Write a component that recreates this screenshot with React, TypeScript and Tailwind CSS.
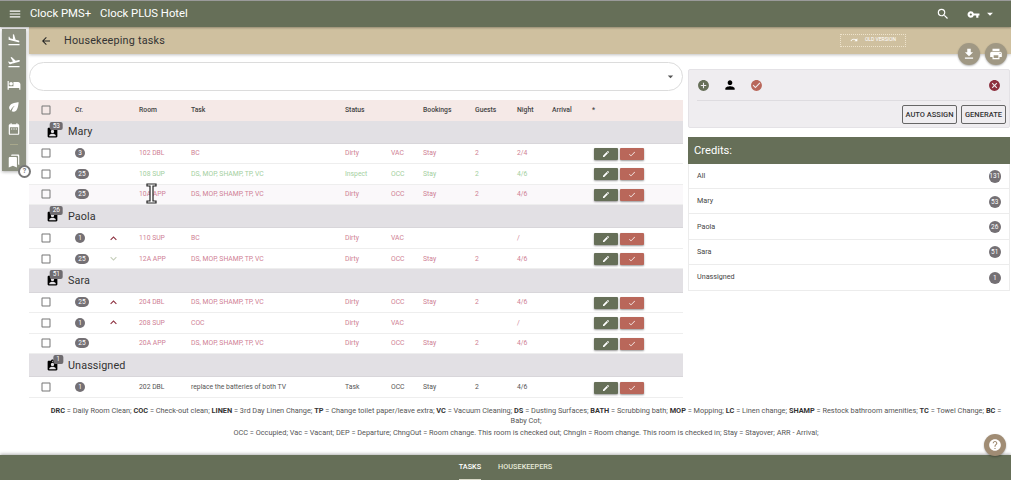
import {
    MdAddCircle,
    MdArrowBack,
    MdArrowDropDown,
    MdAssignmentInd,
    MdBookmarks,
    MdCancel,
    MdCheck,
    MdCheckCircle,
    MdCheckBoxOutlineBlank,
    MdDateRange,
    MdEco,
    MdEdit,
    MdFileDownload,
    MdFlightLand,
    MdFlightTakeoff,
    MdHelp,
    MdHotel,
    MdKeyboardArrowDown,
    MdKeyboardArrowUp,
    MdMenu,
    MdPerson,
    MdPrint,
    MdRedo,
    MdSearch,
    MdVpnKey
} from 'react-icons/md';

type Tone = 'red' | 'green' | 'dark';

type Row = {
    cr: string;
    chevron?: 'up' | 'down';
    room: string;
    task: string;
    status: string;
    occ: string;
    guests?: string;
    night: string;
    booking?: string;
    tone: Tone;
    tint?: boolean;
};

type Group = { name: string; count: string; rows: Row[] };

const ds = 'DS, MOP, SHAMP, TP, VC';

const groups: Group[] = [
    {
        name: 'Mary',
        count: '53',
        rows: [
            { cr: '3', room: '102 DBL', task: 'BC', status: 'Dirty', occ: 'VAC', booking: 'Stay', guests: '2', night: '2/4', tone: 'red' },
            { cr: '25', room: '108 SUP', task: ds, status: 'Inspect', occ: 'OCC', booking: 'Stay', guests: '2', night: '4/6', tone: 'green' },
            { cr: '25', room: '10A APP', task: ds, status: 'Dirty', occ: 'OCC', booking: 'Stay', guests: '2', night: '4/6', tone: 'red', tint: true }
        ]
    },
    {
        name: 'Paola',
        count: '26',
        rows: [
            { cr: '1', chevron: 'up', room: '110 SUP', task: 'BC', status: 'Dirty', occ: 'VAC', night: '/', tone: 'red' },
            { cr: '25', chevron: 'down', room: '12A APP', task: ds, status: 'Dirty', occ: 'OCC', booking: 'Stay', guests: '2', night: '4/6', tone: 'red' }
        ]
    },
    {
        name: 'Sara',
        count: '51',
        rows: [
            { cr: '25', chevron: 'up', room: '204 DBL', task: ds, status: 'Dirty', occ: 'OCC', booking: 'Stay', guests: '2', night: '4/6', tone: 'red' },
            { cr: '1', chevron: 'up', room: '208 SUP', task: 'COC', status: 'Dirty', occ: 'VAC', night: '/', tone: 'red' },
            { cr: '25', room: '20A APP', task: ds, status: 'Dirty', occ: 'OCC', booking: 'Stay', guests: '2', night: '4/6', tone: 'red' }
        ]
    },
    {
        name: 'Unassigned',
        count: '1',
        rows: [
            { cr: '1', room: '202 DBL', task: 'replace the batteries of both TV', status: 'Task', occ: 'OCC', booking: 'Stay', guests: '2', night: '4/6', tone: 'dark' }
        ]
    }
];

const credits = [
    { name: 'All', value: '131' },
    { name: 'Mary', value: '53' },
    { name: 'Paola', value: '26' },
    { name: 'Sara', value: '51' },
    { name: 'Unassigned', value: '1' }
];

const columns = 'grid grid-cols-[46px_33px_31px_52px_154px_46px_32px_52px_42px_35px_40px_1fr] items-center';

const toneClass: Record<Tone, string> = {
    red: 'text-[#cf7f95]',
    green: 'text-[#a3cfa0]',
    dark: 'text-[#555]'
};

function Checkbox() {
    return <MdCheckBoxOutlineBlank size={12} className="ml-[11px] text-[#777]" />;
}

function TaskRow({ row }: { row: Row }) {
    const bg = row.tint ? 'bg-[#faf8fa]' : 'bg-white';
    return (
        <div className={`${columns} h-[20.5px] ${bg} ${toneClass[row.tone]} border-b border-[#eeeeee] text-[6.8px]`}>
            <Checkbox />
            <span className={`${row.cr.length > 1 ? 'w-[14px]' : 'w-[10px]'} h-[10px] rounded-full bg-[#747074] text-white text-[6.5px] leading-[10px] text-center`}>
                {row.cr}
            </span>
            <span className="-ml-[1px]">
                {row.chevron === 'up' && <MdKeyboardArrowUp size={13} className="text-[#8c2f3e]" />}
                {row.chevron === 'down' && <MdKeyboardArrowDown size={13} className="text-[#c4cdb9]" />}
            </span>
            <span>{row.room}</span>
            <span>{row.task}</span>
            <span>{row.status}</span>
            <span>{row.occ}</span>
            <span>{row.booking}</span>
            <span>{row.guests}</span>
            <span>{row.night}</span>
            <span />
            <div className="flex gap-[2px] pl-[2px] pt-[1px]">
                <button className="w-[24px] h-[12px] flex items-center justify-center bg-[#666f58] rounded-[1px] shadow-[0_1px_2px_rgba(0,0,0,0.4)]">
                    <MdEdit size={8} className="text-white" />
                </button>
                <button className="w-[24px] h-[12px] flex items-center justify-center bg-[#b9675a] rounded-[1px] shadow-[0_1px_2px_rgba(0,0,0,0.4)]">
                    <MdCheck size={8} className="text-white" />
                </button>
            </div>
        </div>
    );
}

function GroupHeader({ group }: { group: Group }) {
    return (
        <div className="relative h-[23.2px] bg-[#e2e0e4] flex items-center pl-[17px] gap-[9px] border-b border-[#d8d6da]">
            <MdAssignmentInd size={13} className="text-black mt-[1px]" />
            <span className="pt-[1px] text-[10.8px] text-[#333] tracking-[0.1px]">{group.name}</span>
            <span className="absolute left-[34px] -translate-x-full top-[1px] px-[3px] h-[8.5px] rounded-[2px] bg-[#6f6c70] text-white text-[6.5px] leading-[8.5px] text-center">
                {group.count}
            </span>
        </div>
    );
}

export default function App() {
    return (
        <div className="relative h-[480px] w-[1011px] overflow-hidden bg-white flex flex-col font-['Roboto',sans-serif]">
            {/* Header */}
            <header className="h-[27px] shrink-0 bg-[#666f58] border-t border-[#9a9a9a] flex items-center text-white shadow-[0_1px_2px_rgba(0,0,0,0.3)] z-10">
                <MdMenu size={14} className="ml-[8px]" />
                <span className="ml-[8px] pt-[1px] text-[11.3px]">Clock PMS+</span>
                <span className="ml-[9px] pt-[1px] text-[11.3px]">Clock PLUS Hotel</span>
                <MdSearch size={14} className="ml-auto" />
                <MdVpnKey size={13} className="ml-[17px]" />
                <MdArrowDropDown size={14} className="ml-[3px] mr-[14px]" />
            </header>

            {/* Title bar */}
            <div className="ml-[29px] h-[27px] shrink-0 bg-[#cfc09f] flex items-center shadow-[0_1px_3px_rgba(0,0,0,0.25)]">
                <MdArrowBack size={12} className="ml-[11px] text-[#222]" />
                <span className="ml-[12px] pt-[1px] text-[10.8px] text-[#333] tracking-[0.2px]">Housekeeping tasks</span>
                <div className="ml-[675px] mb-[1px] w-[66px] h-[13px] border border-dotted border-[#eee3cc] flex items-center justify-center gap-[7px] text-white text-[5px]">
                    <MdRedo size={8} />
                    <span>OLD VERSION</span>
                </div>
            </div>

            {/* Content */}
            <main className="h-[344px] shrink-0 ml-[29px] flex gap-[5px]">
                <div className="w-[654px] shrink-0">
                    <div className="mt-[8px] h-[29px] rounded-full border border-[#dcdcdc] bg-white flex items-center justify-end pr-[5px]">
                        <MdArrowDropDown size={13} className="text-[#555]" />
                    </div>
                    <div className="mt-[9px]">
                        <div className={`${columns} h-[20.5px] bg-[#f5e9e7] text-[#444] text-[6.8px] font-medium`}>
                            <Checkbox />
                            <span>Cr.</span>
                            <span />
                            <span>Room</span>
                            <span>Task</span>
                            <span>Status</span>
                            <span />
                            <span>Bookings</span>
                            <span>Guests</span>
                            <span>Night</span>
                            <span>Arrival</span>
                            <span>*</span>
                        </div>
                        {groups.map(group => (
                            <div key={group.name}>
                                <GroupHeader group={group} />
                                {group.rows.map(row => (
                                    <TaskRow key={row.room} row={row} />
                                ))}
                            </div>
                        ))}
                    </div>
                </div>

                {/* Right column */}
                <div className="flex-1 pt-[15px] pr-[1px]">
                    <div className="h-[59px] bg-[#efedf0] border border-[#e4e2e6] rounded-[2px] pl-[8px] pr-[3px]">
                        <div className="h-[31px] mr-[5px] flex items-center border-b border-[#dedce0]">
                            <MdAddCircle size={13} className="text-[#666f58]" />
                            <MdPerson size={14} className="ml-[13px] text-black" />
                            <MdCheckCircle size={13} className="ml-[13px] text-[#b9675a]" />
                            <MdCancel size={13} className="ml-auto text-[#8c2f3e]" />
                        </div>
                        <div className="flex justify-end gap-[4px] mt-[4px]">
                            <button className="w-[55px] h-[19px] border-[1.5px] border-[#666] rounded-[2px] text-[7.5px] font-medium text-[#333]">AUTO ASSIGN</button>
                            <button className="w-[45px] h-[19px] border-[1.5px] border-[#666] rounded-[2px] text-[7.5px] font-medium text-[#333]">GENERATE</button>
                        </div>
                    </div>
                    <div className="mt-[9px] h-[27px] bg-[#666f58] flex items-center pl-[6px] pt-[1px] text-white text-[11.2px]">Credits:</div>
                    <div className="border border-t-0 border-[#ececec]">
                        {credits.map(item => (
                            <div key={item.name} className="h-[25.2px] pt-[1px] flex items-center justify-between pl-[8px] pr-[8px] border-b border-[#ececec] last:border-b-0 text-[7.2px] text-[#444]">
                                <span>{item.name}</span>
                                <span className="w-[12.5px] h-[12.5px] rounded-full bg-[#747074] text-white text-[6.5px] leading-[12.5px] text-center">{item.value}</span>
                            </div>
                        ))}
                    </div>
                </div>
            </main>

            {/* Legend */}
            <div className="ml-[46px] w-[960px] mt-[8px] text-center text-[7.35px] leading-[10px] text-[#555]">
                <p>
                    <b className="text-[#333]">DRC</b> = Daily Room Clean; <b className="text-[#333]">COC</b> = Check-out clean; <b className="text-[#333]">LINEN</b> = 3rd Day Linen Change; <b className="text-[#333]">TP</b> = Change toilet paper/leave extra; <b className="text-[#333]">VC</b> = Vacuum Cleaning; <b className="text-[#333]">DS</b> = Dusting Surfaces; <b className="text-[#333]">BATH</b> = Scrubbing bath; <b className="text-[#333]">MOP</b> = Mopping; <b className="text-[#333]">LC</b> = Linen change; <b className="text-[#333]">SHAMP</b> = Restock bathroom amenities; <b className="text-[#333]">TC</b> = Towel Change; <b className="text-[#333]">BC</b> = Baby Cot;
                </p>
                <p className="mt-[2px]">OCC = Occupied; Vac = Vacant; DEP = Departure; ChngOut = Room change. This room is checked out; ChngIn = Room change. This room is checked in; Stay = Stayover; ARR - Arrival;</p>
            </div>

            {/* Footer tabs */}
            <footer className="mt-auto h-[25px] shrink-0 bg-[#666f58] flex items-center justify-center gap-[17px] text-[7.3px] font-medium text-white shadow-[0_-1px_3px_rgba(0,0,0,0.3)]">
                <span className="relative">
                    TASKS
                    <span className="absolute left-0 right-0 top-[17px] h-[2px] bg-[#d9d9c8]" />
                </span>
                <span className="text-[#e7ead9]">HOUSEKEEPERS</span>
            </footer>

            {/* Floating side menu */}
            <nav className="absolute left-[2px] top-[29px] w-[24px] h-[142px] bg-[#8c9080] flex flex-col items-center pt-[4px] gap-[8.3px] text-white shadow-[0_1px_3px_rgba(0,0,0,0.3)]">
                <MdFlightLand size={14} />
                <MdFlightTakeoff size={14} />
                <MdHotel size={14} />
                <MdEco size={14} />
                <MdDateRange size={14} />
                <span className="w-[8px] h-px bg-[#a8a88c]" />
                <MdBookmarks size={14} />
            </nav>
            <span className="absolute left-[18px] top-[165px] w-[13px] h-[13px] rounded-full bg-white border-2 border-[#777] flex items-center justify-center text-[#777] text-[7px] font-bold">?</span>

            {/* Floating action buttons */}
            <button className="absolute left-[958px] top-[43px] w-[22px] h-[22px] rounded-full bg-[#a09884] flex items-center justify-center text-white shadow-[0_1px_2px_rgba(0,0,0,0.3)]">
                <MdFileDownload size={14} />
            </button>
            <button className="absolute left-[985px] top-[43px] w-[22px] h-[22px] rounded-full bg-[#a09884] flex items-center justify-center text-white shadow-[0_1px_2px_rgba(0,0,0,0.3)]">
                <MdPrint size={14} />
            </button>
            <button className="absolute left-[984px] top-[434px] w-[22px] h-[22px] rounded-full bg-[#a08c74] flex items-center justify-center text-white shadow-[0_1px_2px_rgba(0,0,0,0.3)]">
                <MdHelp size={14} />
            </button>

            {/* Text cursor captured in the screenshot */}
            <svg className="absolute left-[146px] top-[183px]" width="11" height="21" viewBox="0 0 11 21">
                <path d="M1 1h9v2H7v15h3v2H1v-2h3V3H1z" fill="#fff" stroke="#222" strokeWidth="1.2" />
            </svg>
        </div>
    );
}
